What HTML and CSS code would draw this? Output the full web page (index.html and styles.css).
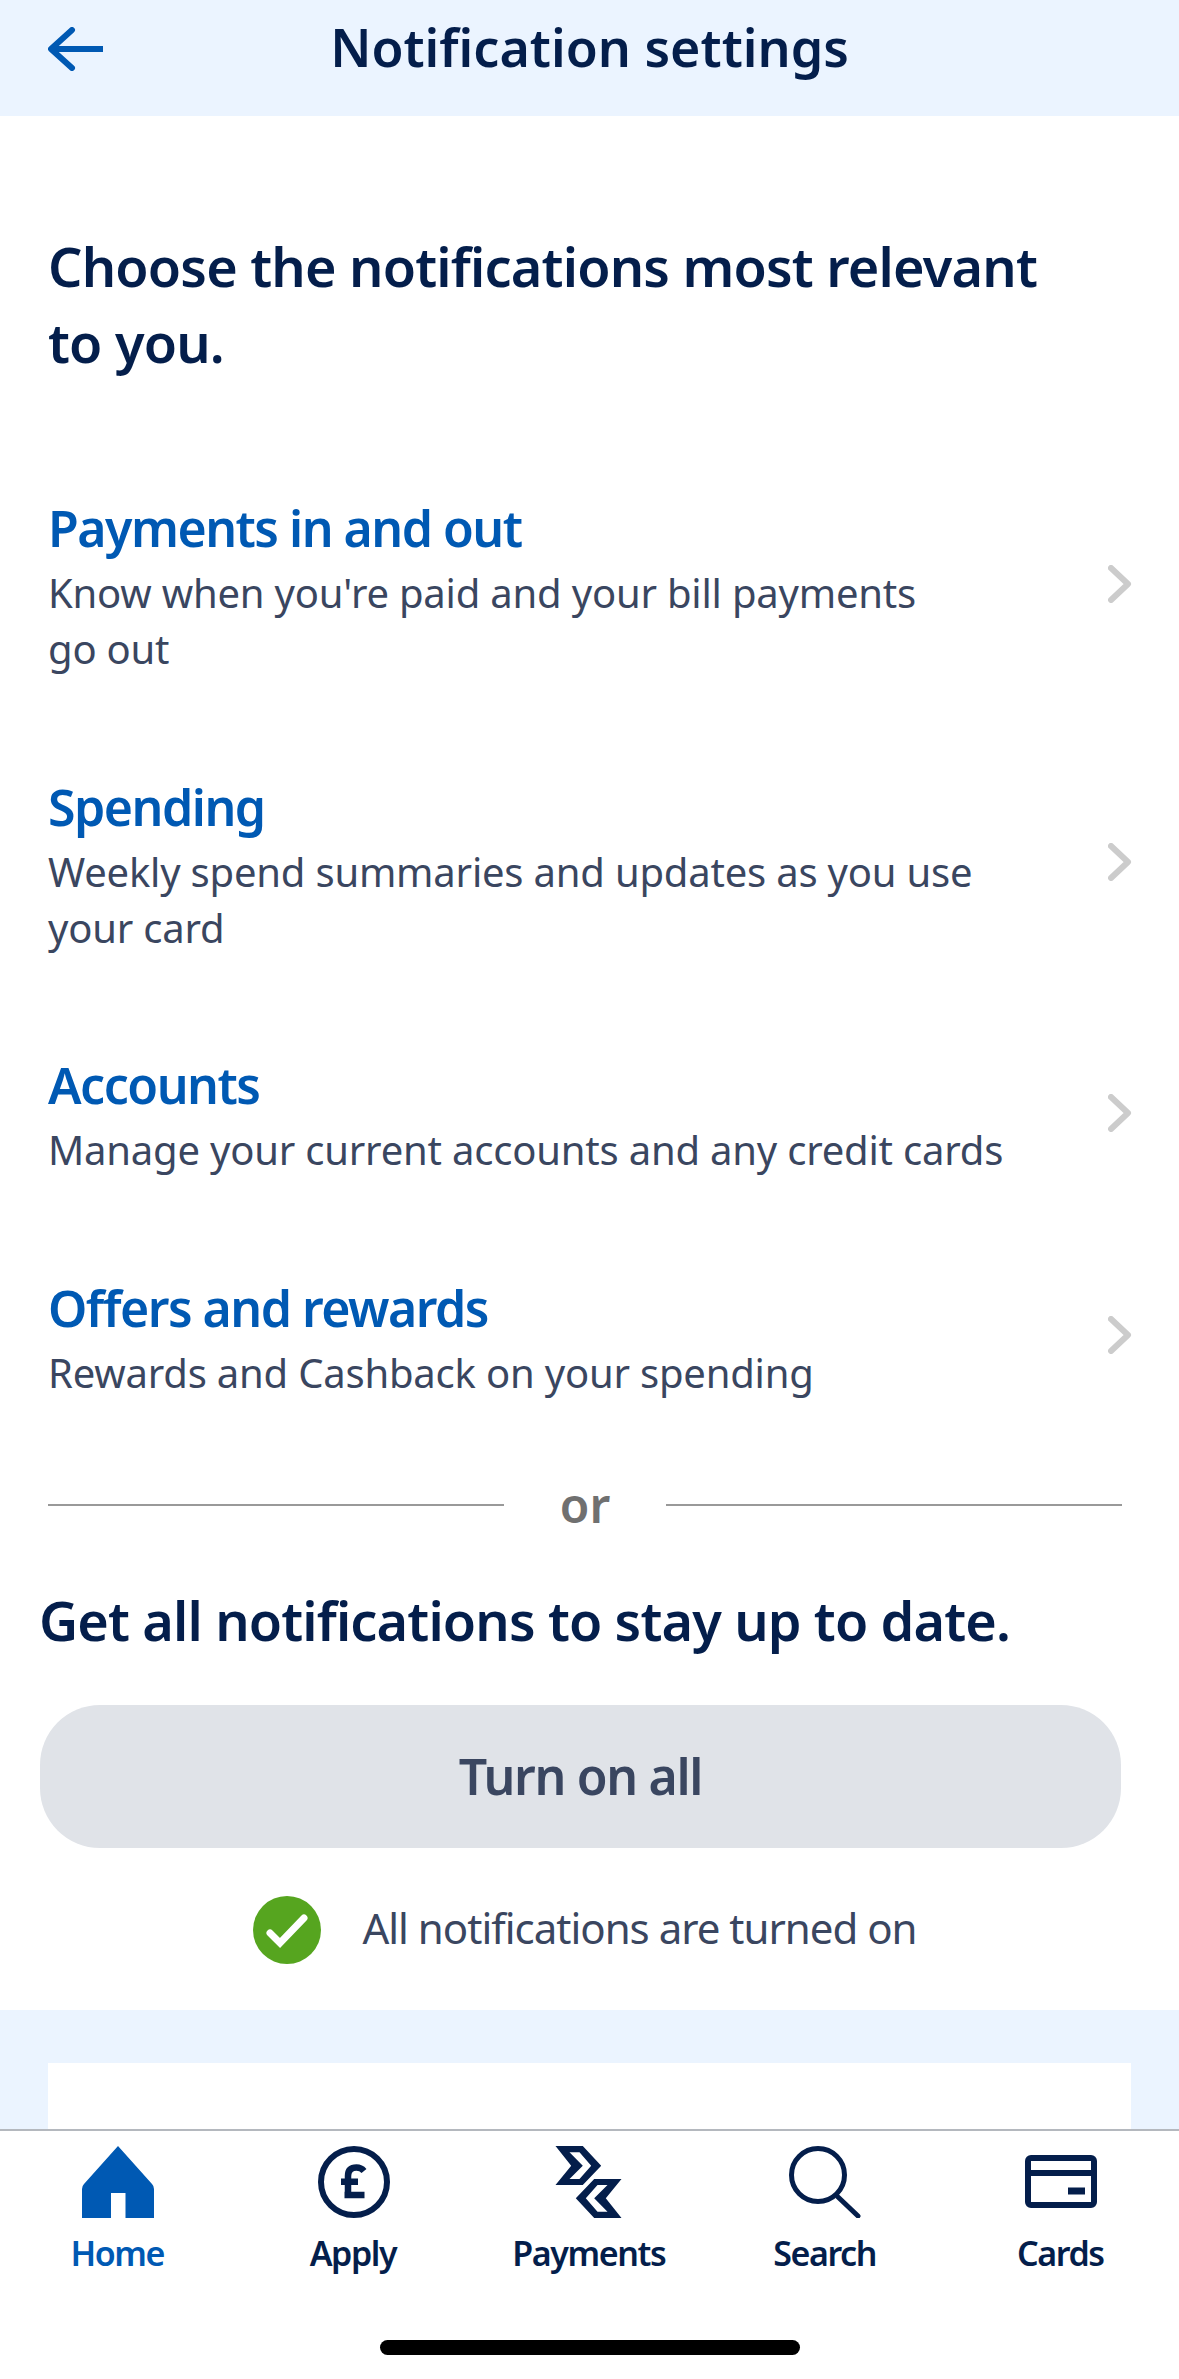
FILE: index.html
```html
<!DOCTYPE html>
<html lang="en">

<head>
    <meta charset="UTF-8">
    <meta name="viewport" content="width=device-width, initial-scale=1.0">
    <title>Notification settings</title>
    <link rel="stylesheet" href="styles.css">
</head>

<body>
    <header class="topbar">
        <svg class="back-icon" viewBox="0 0 56 44" fill="none" stroke="#0059b3" stroke-width="6">
            <path d="M3 22H55" />
            <path d="M24 3L3 22L24 41" stroke-linecap="round" stroke-linejoin="round" />
        </svg>
        <h1 class="topbar-title">Notification settings</h1>
    </header>

    <main class="content">
        <section class="choices">
            <h2 class="lead">Choose the notifications most relevant to&nbsp;you.</h2>

            <a class="topic">
                <div class="topic-text">
                    <div class="topic-name">Payments in and out</div>
                    <div class="topic-desc">Know when you're paid and your bill payments<br>go out</div>
                </div>
                <svg class="chevron" viewBox="0 0 24 38" fill="none" stroke="#ccc" stroke-width="6" stroke-linecap="round" stroke-linejoin="round">
                    <path d="M3 3L20 19L3 35" />
                </svg>
            </a>

            <a class="topic">
                <div class="topic-text">
                    <div class="topic-name">Spending</div>
                    <div class="topic-desc">Weekly spend summaries and updates as you use<br>your card</div>
                </div>
                <svg class="chevron" viewBox="0 0 24 38" fill="none" stroke="#ccc" stroke-width="6" stroke-linecap="round" stroke-linejoin="round">
                    <path d="M3 3L20 19L3 35" />
                </svg>
            </a>

            <a class="topic">
                <div class="topic-text">
                    <div class="topic-name">Accounts</div>
                    <div class="topic-desc">Manage your current accounts and any credit cards</div>
                </div>
                <svg class="chevron" viewBox="0 0 24 38" fill="none" stroke="#ccc" stroke-width="6" stroke-linecap="round" stroke-linejoin="round">
                    <path d="M3 3L20 19L3 35" />
                </svg>
            </a>

            <a class="topic">
                <div class="topic-text">
                    <div class="topic-name">Offers and rewards</div>
                    <div class="topic-desc">Rewards and Cashback on your spending</div>
                </div>
                <svg class="chevron" viewBox="0 0 24 38" fill="none" stroke="#ccc" stroke-width="6" stroke-linecap="round" stroke-linejoin="round">
                    <path d="M3 3L20 19L3 35" />
                </svg>
            </a>

            <div class="or-divider">
                <span class="or-line"></span>
                <span class="or-text">or</span>
                <span class="or-line"></span>
            </div>

            <h2 class="lead lead-all">Get all notifications to stay up to date.</h2>
            <button class="turn-on-btn">Turn on all</button>

            <div class="status">
                <svg class="status-icon" viewBox="0 0 68 68">
                    <circle cx="34" cy="34" r="34" fill="#56a51f" />
                    <path d="M17 37L27 47L51 22" fill="none" stroke="#fff" stroke-width="7" stroke-linecap="round" stroke-linejoin="miter" />
                </svg>
                <span class="status-text">All notifications are turned on</span>
            </div>
        </section>

        <section class="next-section">
            <div class="next-card"></div>
        </section>
    </main>

    <nav class="tabbar">
        <div class="tab tab-active">
            <svg class="tab-icon" viewBox="0 0 72 72" fill="#0059b3">
                <path fill-rule="evenodd" d="M36 0L70 38Q72 40 72 43V72H43.500V47H29V72H0V43Q0 40 2 38Z" />
            </svg>
            <span>Home</span>
        </div>
        <div class="tab">
            <svg class="tab-icon" viewBox="0 0 72 72" fill="none" stroke="#041e4b" stroke-width="6">
                <circle cx="36" cy="36" r="33" />
                <path d="M46 25Q43 21.500 38.500 21.500Q30 21.500 30 30V52M23 35.700H40M26.500 49H46.500" stroke-width="6.500" />
            </svg>
            <span>Apply</span>
        </div>
        <div class="tab">
            <svg class="tab-icon" viewBox="1.500 0 72 72" fill="#041e4b" fill-rule="evenodd">
                <path d="M4 0H31.300L49.700 19.700L31.300 39H4L19.700 19.700ZM18 6.300L31.300 19.700L18 33H28L39.700 19.700L28 6.300Z" />
                <path d="M70 72H42.700L24.300 52.300L42.700 33H70L54.300 52.300ZM56 65.700L42.700 52.300L56 39H46L34.300 52.300L46 65.700Z" />
            </svg>
            <span>Payments</span>
        </div>
        <div class="tab">
            <svg class="tab-icon" viewBox="0 2 72 72" fill="none" stroke="#041e4b" stroke-width="5" stroke-linecap="round">
                <circle cx="29" cy="31" r="26.500" />
                <path d="M49 53L69 72" />
            </svg>
            <span>Search</span>
        </div>
        <div class="tab">
            <svg class="tab-icon" viewBox="0 0 72 72" fill="none" stroke="#041e4b" stroke-width="6">
                <rect x="3" y="12" width="66" height="47" rx="3" />
                <path d="M3 27H69" />
                <path d="M43 45H60" stroke-width="7" />
            </svg>
            <span>Cards</span>
        </div>
        <div class="home-indicator"></div>
    </nav>
</body>

</html>
```

FILE: styles.css
```css
* {
    box-sizing: border-box;
}

body {
    margin: 0;
    height: 2379px;
    overflow: hidden;
    display: flex;
    flex-direction: column;
    font-family: "Noto Sans", Arial, sans-serif;
    background-color: #fff;
    color: #041e4b;
}

.topbar {
    height: 116px;
    flex-shrink: 0;
    position: relative;
    background-color: #ebf4ff;
    display: flex;
    justify-content: center;
    padding-top: 13px;
}

.back-icon {
    position: absolute;
    left: 48px;
    top: 27px;
    width: 56px;
    height: 44px;
}

.topbar-title {
    margin: 0;
    font-size: 52px;
    line-height: 68px;
    font-weight: 600;
    letter-spacing: 0;
}

.content {
    flex: 1;
    overflow: hidden;
}

.choices {
    padding: 112px 47px 46px 48px;
}

.lead {
    margin: 0 0 116px;
    font-size: 54px;
    line-height: 76px;
    font-weight: 600;
    letter-spacing: -0.8px;
}

.topic {
    display: flex;
    align-items: center;
    justify-content: space-between;
    margin-bottom: 97.500px;
}

.topic-text {
    min-width: 0;
}

.topic-name {
    font-size: 50px;
    line-height: 64px;
    font-weight: 600;
    color: #0059b3;
    letter-spacing: -1.5px;
    margin-bottom: 5px;
}

.topic-desc {
    font-size: 40px;
    line-height: 56px;
    color: #3a4660;
    letter-spacing: -0.2px;
}

.chevron {
    width: 24px;
    height: 38px;
    flex-shrink: 0;
    margin-bottom: 6px;
}

.or-divider {
    display: flex;
    align-items: center;
    height: 60px;
    margin-top: -23.500px;
    margin-right: 10px;
    gap: 56px;
}

.or-line {
    flex: 1;
    height: 2px;
    background-color: #999;
}

.or-text {
    font-size: 48px;
    line-height: 60px;
    font-weight: 600;
    color: #707070;
}

.lead-all {
    margin: 47px -8px 47px -9px;
    letter-spacing: -0.85px;
}

.turn-on-btn {
    display: block;
    width: 1081px;
    height: 143px;
    margin-left: -8px;
    border: none;
    border-radius: 60px;
    background-color: #e0e3e8;
    color: #3a4660;
    font-family: inherit;
    font-size: 50px;
    font-weight: 600;
    letter-spacing: -1.3px;
}

.status {
    display: flex;
    align-items: center;
    justify-content: center;
    gap: 41px;
    margin-top: 48px;
    padding-right: 10px;
}

.status-icon {
    width: 68px;
    height: 68px;
    flex-shrink: 0;
}

.status-text {
    font-size: 42px;
    color: #3a4660;
    letter-spacing: -1px;
    margin-bottom: 4px;
}

.next-section {
    background-color: #ebf4ff;
    padding: 53px 48px 0;
    height: 300px;
}

.next-card {
    background-color: #fff;
    height: 300px;
}

.tabbar {
    height: 250px;
    flex-shrink: 0;
    position: relative;
    display: grid;
    grid-template-columns: repeat(5, 1fr);
    align-items: start;
    border-top: 2px solid #b4b8be;
    background-color: #fff;
    padding-top: 15px;
}

.tab {
    display: flex;
    flex-direction: column;
    align-items: center;
    font-size: 34px;
    line-height: 50px;
    font-weight: 600;
    letter-spacing: -1.4px;
}

.tab span {
    margin-right: 1.400px;
}

.tab-icon {
    width: 72px;
    height: 72px;
    margin-bottom: 10px;
}

.tab-active {
    color: #0059b3;
}

.home-indicator {
    position: absolute;
    left: 380px;
    top: 209px;
    width: 420px;
    height: 15px;
    border-radius: 8px;
    background-color: #000;
}
```
